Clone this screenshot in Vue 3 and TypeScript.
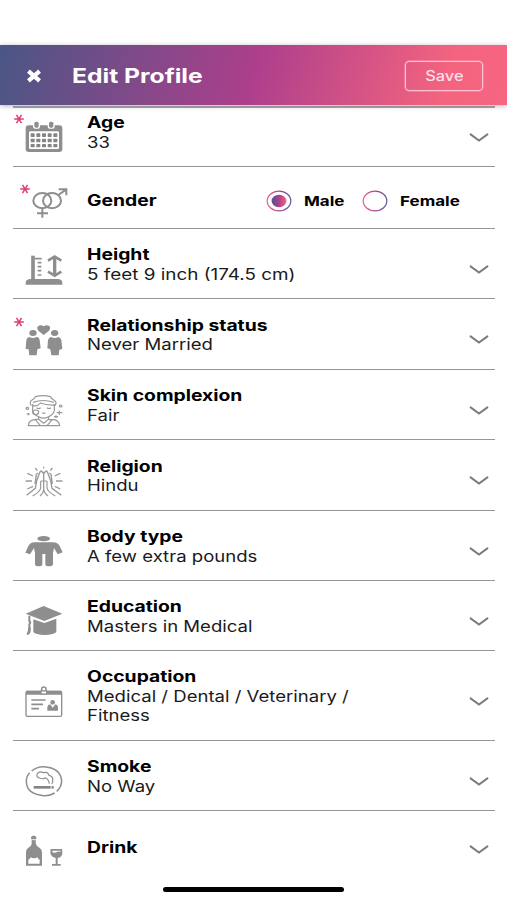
<script setup lang="ts">
import { ref } from 'vue'

type IconName =
  | 'age' | 'gender' | 'height' | 'relation' | 'skin' | 'religion'
  | 'body' | 'education' | 'occupation' | 'smoke' | 'drink'

interface Field {
  icon: IconName
  label: string
  lines?: string[]
  required?: boolean
}

const boxes: Record<IconName, string> = {
  age: '75 246 114 96',
  gender: '75 69 114 96',
  height: '75 265 114 96',
  relation: '75 73 114 96',
  skin: '75 285 114 96',
  religion: '75 76 114 96',
  body: '75 288 114 96',
  education: '75 78 114 96',
  occupation: '75 318 114 96',
  smoke: '75 93 114 96',
  drink: '75 295 114 96',
}

const fields: Field[] = [
  { icon: 'age', label: 'Age', lines: ['33'], required: true },
  { icon: 'gender', label: 'Gender', required: true },
  { icon: 'height', label: 'Height', lines: ['5 feet 9 inch (174.5 cm)'] },
  { icon: 'relation', label: 'Relationship status', lines: ['Never Married'], required: true },
  { icon: 'skin', label: 'Skin complexion', lines: ['Fair'] },
  { icon: 'religion', label: 'Religion', lines: ['Hindu'] },
  { icon: 'body', label: 'Body type', lines: ['A few extra pounds'] },
  { icon: 'education', label: 'Education', lines: ['Masters in Medical'] },
  { icon: 'occupation', label: 'Occupation', lines: ['Medical / Dental / Veterinary /', 'Fitness'] },
  { icon: 'smoke', label: 'Smoke', lines: ['No Way'] },
  { icon: 'drink', label: 'Drink' },
]

const genders = ['Male', 'Female']
const gender = ref('Male')
const calendarDots = [0, 1, 2, 3, 4]
</script>

<template>
  <div class="screen">
    <header class="bar">
      <button class="close" aria-label="Close">
        <svg viewBox="0 0 16 14" width="16" height="14"><path d="M2.4 2.2 13.6 11.8M13.6 2.2 2.4 11.8" stroke="#fff" stroke-width="4.2" /></svg>
      </button>
      <h1 class="title"><span>Edit Profile</span></h1>
      <button class="save"><span>Save</span></button>
    </header>

    <main class="list">
      <section v-for="f in fields" :key="f.icon" class="row" :class="f.icon">
        <div class="icon">
          <svg v-if="f.required" class="star" viewBox="0 0 10 10" width="10" height="10">
            <path d="M.2 5H9.8M2.5 .9 7.5 9.1M7.5 .9 2.5 9.1" stroke="#dd3f78" stroke-width="1.5" />
          </svg>
          <svg :viewBox="boxes[f.icon]" width="38" height="32" fill="none" stroke="#8e8e8e">
            <g v-if="f.icon === 'age'" stroke="none">
              <rect x="77" y="256" width="110" height="80" rx="9" fill="#8e8e8e" />
              <rect x="87" y="274" width="90" height="53" rx="4" fill="#fff" />
              <rect x="99" y="240" width="21" height="26" rx="6" fill="#fff" />
              <rect x="143" y="240" width="21" height="26" rx="6" fill="#fff" />
              <rect x="103" y="245" width="13" height="18" rx="5" fill="#8e8e8e" />
              <rect x="147" y="245" width="13" height="18" rx="5" fill="#8e8e8e" />
              <g fill="#858585">
                <template v-for="c in calendarDots" :key="c">
                  <rect :x="92 + c * 17" y="280" width="12" height="11" rx="2" />
                  <rect :x="92 + c * 17" y="296" width="12" height="11" rx="2" />
                  <rect :x="92 + c * 17" y="312" width="12" height="10" rx="2" />
                </template>
              </g>
            </g>
            <g v-else-if="f.icon === 'gender'" stroke-width="6">
              <ellipse cx="127" cy="107" rx="27" ry="23" />
              <ellipse cx="156" cy="107" rx="27" ry="23" />
              <path d="M127 131V158M111 145H144M175 90 199 73M176 73H199V91" />
            </g>
            <g v-else-if="f.icon === 'height'">
              <path d="M77 357V351Q77 341 92 340H172Q187 341 187 351V357Z" fill="#8e8e8e" stroke="none" />
              <path d="M99 270V342" stroke-width="11" />
              <path d="M104 279H125M113 291H124M113 303H124M113 315H124M113 328H124" stroke-width="5" />
              <path d="M164 274V329" stroke-width="10" />
              <path d="M144 285 164 273 184 285M144 318 164 330 184 318" stroke-width="8" />
            </g>
            <g v-else-if="f.icon === 'relation'" fill="#8e8e8e" stroke="none">
              <path d="M131 103 115 90Q108 80 116 75Q125 72 131 77Q138 72 147 75Q154 80 147 90Z" />
              <ellipse cx="99" cy="97" rx="11" ry="9" />
              <path d="M88 109Q99 115 110 109Q118 110 119 119L122 143 112 146 110 164H88L86 146 77 145 79 118Q81 110 88 109Z" />
              <ellipse cx="164" cy="97" rx="11" ry="9" />
              <path d="M153 109Q164 115 175 109Q182 110 184 118L187 145 178 147 176 164H154L151 146 142 143 144 119Q146 110 153 109Z" />
            </g>
            <g v-else-if="f.icon === 'skin'" stroke="#999" stroke-width="3.6">
              <path d="M94 317Q86 306 97 299Q104 297 106 290Q130 284 151 290Q155 297 161 300Q173 306 165 317M99 307Q130 296 161 307M98 312V332Q101 345 116 350Q131 359 146 350Q160 344 163 332V312M100 317Q113 320 121 309Q140 316 162 315" />
              <path d="M110 323Q116 328 122 323M141 323Q147 328 153 323M127 338Q131 342 136 338" />
              <ellipse cx="107" cy="337" rx="9" ry="7" />
              <path d="M116 350V358L131 370 146 358V350M116 358Q99 357 91 363Q86 368 85 377H179Q177 362 163 359L146 358M106 359 121 377M157 359 141 377" />
              <ellipse cx="82" cy="325" rx="4" ry="3" /><ellipse cx="182" cy="318" rx="4" ry="3" />
              <path d="M85 339V346M80 342H90M178 332V345M170 338H187M168 346V354M162 350H174" />
            </g>
            <g v-else-if="f.icon === 'religion'" stroke="#999" stroke-width="4">
              <path d="M131 93V150M129 98Q123 85 119 96L110 120 106 143 80 164M133 98Q139 85 143 96L152 120 156 143 184 164M114 97 109 101 105 130M148 97 153 101 157 130" />
              <path d="M122 121V142Q121 152 98 166M141 121V142Q142 152 166 166M131 148Q129 159 120 166M131 148Q134 159 144 166M122 121H141" stroke-width="3.6" />
              <path d="M131 78V83M106 82 112 90M157 82 151 90M82 98 99 106M181 98 164 106M77 121H96M168 121H187M82 145 99 137M181 145 165 137" />
            </g>
            <g v-else-if="f.icon === 'body'" fill="#8e8e8e" stroke="none">
              <ellipse cx="131" cy="296" rx="19" ry="8" />
              <path d="M104 307H159Q174 308 179 318L188 337 173 343 162 324 159 340V373Q158 379 151 379H143Q136 379 136 373V342H127V373Q127 379 120 379H112Q105 379 105 373V340L102 324 90 343 76 338 85 318Q90 308 104 307Z" />
            </g>
            <g v-else-if="f.icon === 'education'" fill="#8e8e8e" stroke="none">
              <path d="M77 101 131 78 187 101 133 123Z" />
              <path d="M100 118 133 129 169 116V156Q162 164 134 165Q106 164 100 156Z" />
              <path d="M88 107V123Q93 128 88 133V140Q88 154 82 164M88 137Q92 151 86 161" fill="none" stroke="#8e8e8e" stroke-width="6" />
            </g>
            <g v-else-if="f.icon === 'occupation'">
              <rect x="78" y="334" width="107" height="75" rx="4" stroke-width="4" />
              <path d="M78 338H185" stroke-width="12" />
              <path d="M125 335V327Q125 321 131 321Q138 321 138 327V335" stroke-width="4.5" />
              <rect x="123" y="333" width="17" height="9" fill="#fff" stroke-width="3.5" />
              <path d="M94 360H137M94 373H129M94 386H117" stroke-width="5" />
              <ellipse cx="158" cy="367" rx="7" ry="7" fill="#8e8e8e" stroke="none" />
              <path d="M142 392V381Q143 374 151 373L158 383 166 373Q174 375 174 382V392Z" fill="#8e8e8e" stroke="none" />
            </g>
            <g v-else-if="f.icon === 'smoke'" stroke-width="4.5">
              <path d="M95 108Q112 94 131 95Q183 98 185 139Q183 158 170 169M164 174Q149 183 131 182Q79 178 79 139Q79 123 89 113" />
              <path d="M101 157H152" stroke-width="8" stroke="#858585" />
              <path d="M158 153V161" stroke-width="7" />
              <path d="M118 129Q107 125 112 116Q119 107 130 113Q144 109 147 121Q160 124 158 135Q160 142 155 147M118 129Q128 134 136 128Q147 134 148 146" stroke-width="3.6" />
            </g>
            <g v-else stroke="none" fill="#8e8e8e">
              <path d="M93 301Q101 292 109 301V306H107V320Q109 329 118 333Q126 337 126 347V387H78V347Q78 337 85 333Q95 328 95 320V306H93Z" />
              <path d="M95 309H107" stroke="#fff" stroke-width="2.5" />
              <path d="M85 381V369Q91 367 91 362Q102 368 113 362Q113 367 119 369V381Z" fill="#fff" />
              <path d="M152 337H186L187 349Q186 362 173 364V382H182V387H156V382H167V364Q153 361 151 349Z" />
              <path d="M157 342H181V346Q175 343 169 347Q162 350 157 346Z" fill="#fff" />
            </g>
          </svg>
        </div>

        <div class="text">
          <div class="label">{{ f.label }}</div>
          <div v-for="line in f.lines" :key="line" class="value">{{ line }}</div>
        </div>

        <div v-if="f.icon === 'gender'" class="choices">
          <label v-for="g in genders" :key="g" class="choice" @click="gender = g">
            <svg viewBox="0 0 26 22" width="26" height="22">
              <defs>
                <linearGradient id="ring"><stop offset="0" stop-color="#ee5c86" /><stop offset=".5" stop-color="#ad4597" /><stop offset="1" stop-color="#535a96" /></linearGradient>
                <linearGradient id="dot"><stop offset="0" stop-color="#4b5791" /><stop offset=".5" stop-color="#af3f8c" /><stop offset="1" stop-color="#f5647f" /></linearGradient>
              </defs>
              <ellipse cx="13" cy="11" rx="11.8" ry="9.9" fill="#fff" stroke="url(#ring)" stroke-width="1.2" />
              <ellipse v-if="gender === g" cx="13" cy="11" rx="7.4" ry="6.2" fill="url(#dot)" />
            </svg>
            <span class="choice-name">{{ g }}</span>
          </label>
        </div>
        <svg v-else class="chevron" viewBox="0 0 20 10" width="20" height="10">
          <path d="M1.6 1.4 10 7.6 18.4 1.4" fill="none" stroke="#7c7c7c" stroke-width="2" stroke-linecap="round" />
        </svg>
      </section>
    </main>
    <div class="home" />
  </div>
</template>

<style>
body { background: #fff; }
</style>

<style scoped>
.screen {
  box-sizing: border-box;
  width: 507px;
  height: 900px;
  padding-top: 45px;
  overflow: hidden;
  background: #fff;
  color: #000;
  font-family: Inter, "Liberation Sans", sans-serif;
}
.bar {
  position: relative;
  z-index: 1;
  display: flex;
  align-items: center;
  box-sizing: border-box;
  height: 60px;
  padding: 1px 24px 0 26px;
  background: linear-gradient(105deg, #4a5685 0%, #ad3f8c 50%, #f5647f 88%, #f66581 100%);
  box-shadow: 0 1px 5px rgba(0, 0, 0, 0.3);
}
button {
  padding: 0;
  background: none;
  border: 0;
  color: inherit;
  font: inherit;
}
.close { display: flex; width: 46px; }
.title {
  flex: 1;
  margin: 0;
  color: #fff;
  font-size: 19.5px;
  font-weight: 700;
  line-height: 24px;
}
.title span, .save span { display: inline-block; }
.title span {
  transform: scaleX(1.265);
  transform-origin: left;
}
.save span { transform: scaleX(1.17); }
.save {
  box-sizing: border-box;
  width: 78px;
  height: 30px;
  border: 1px solid #ffc3d5;
  border-radius: 4px;
  box-shadow: 0 0 0 0.5px rgba(255, 195, 213, 0.6);
  color: #ffdfe9;
  font-size: 14px;
  font-weight: 500;
}
.list { margin: -8px 12.5px 0 13px; }
.row {
  display: flex;
  align-items: center;
  box-sizing: border-box;
  height: 70px;
  border-bottom: 1px solid #969696;
}
.row.gender { height: 62px; }
.row.relation, .row.religion { height: 71px; }
.row.occupation { height: 90px; }
.row.drink { height: 66px; border-bottom: 0; }
.row.age {
  background: linear-gradient(#aaa, #aaa) 0 9px / 100% 2px no-repeat;
}
.icon {
  position: relative;
  width: 38px;
  height: 32px;
  margin: 13px 24px 0 12px;
}
.icon svg { display: block; overflow: visible; }
.icon .star { position: absolute; top: -8px; left: -11px; }
.gender .icon .star { top: -4px; left: -5px; }
.text {
  flex: 1;
  padding-top: 2px;
  white-space: nowrap;
}
.label, .value {
  width: max-content;
  font-size: 15.5px;
  line-height: 19.5px;
  transform-origin: left;
}
.label { font-weight: 700; transform: scaleX(1.246); }
.value { color: #1a1a1a; transform: scaleX(1.197); }
.height .value { transform: scaleX(1.217); }
.gender .text { padding-top: 7px; }
.drink .text { padding-top: 7px; }
.chevron { margin: 12px 5.5px 0 0; }
.choices {
  display: flex;
  margin-right: 47px;
  padding-top: 7px;
}
.choice { display: flex; align-items: center; }
.choice + .choice { margin-left: 26px; }
.choice-name {
  margin-left: 12px;
  font-size: 13.5px;
  font-weight: 700;
  transform: scaleX(1.26);
  transform-origin: left;
}
.home {
  width: 181px;
  height: 5px;
  margin: 10px auto 0;
  border-radius: 3px;
  background: #000;
}
</style>
